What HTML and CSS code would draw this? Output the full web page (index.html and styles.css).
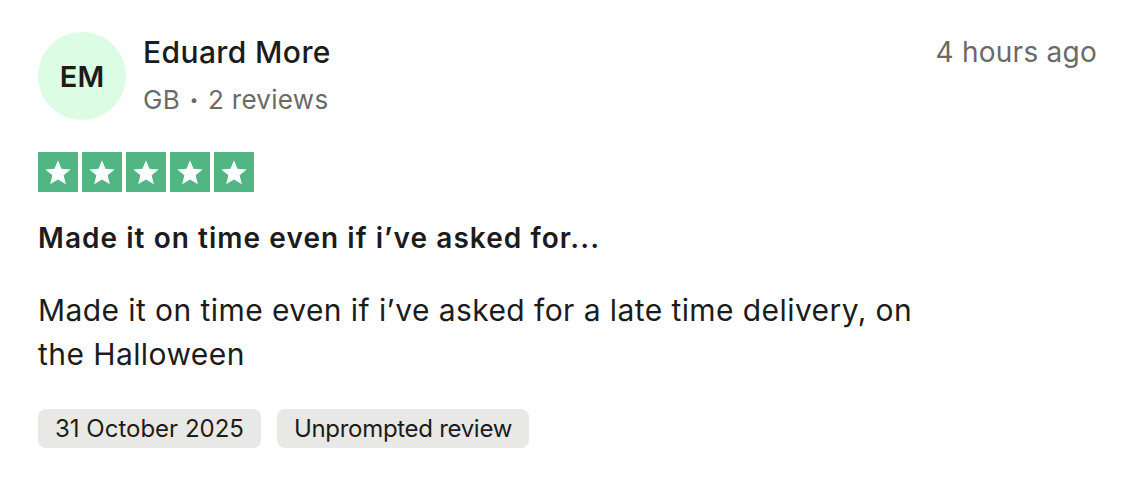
FILE: index.html
```html
<!DOCTYPE html>
<html>
<head>
<meta charset="utf-8">
<link rel="stylesheet" href="styles.css">
</head>
<body>
<article class="review">
  <header class="head">
    <div class="avatar">EM</div>
    <div class="who">
      <div class="name">Eduard More</div>
      <div class="meta">GB <span class="dot">•</span> 2 reviews</div>
    </div>
    <div class="time">4 hours ago</div>
  </header>
  <div class="stars">
    <span class="star"><svg viewBox="0 0 24 24"><path d="M12 3.2l2.6 6.4 6.9.5-5.3 4.4 1.7 6.7L12 17.6l-5.9 3.6 1.7-6.7-5.3-4.4 6.9-.5z"/></svg></span>
    <span class="star"><svg viewBox="0 0 24 24"><path d="M12 3.2l2.6 6.4 6.9.5-5.3 4.4 1.7 6.7L12 17.6l-5.9 3.6 1.7-6.7-5.3-4.4 6.9-.5z"/></svg></span>
    <span class="star"><svg viewBox="0 0 24 24"><path d="M12 3.2l2.6 6.4 6.9.5-5.3 4.4 1.7 6.7L12 17.6l-5.9 3.6 1.7-6.7-5.3-4.4 6.9-.5z"/></svg></span>
    <span class="star"><svg viewBox="0 0 24 24"><path d="M12 3.2l2.6 6.4 6.9.5-5.3 4.4 1.7 6.7L12 17.6l-5.9 3.6 1.7-6.7-5.3-4.4 6.9-.5z"/></svg></span>
    <span class="star"><svg viewBox="0 0 24 24"><path d="M12 3.2l2.6 6.4 6.9.5-5.3 4.4 1.7 6.7L12 17.6l-5.9 3.6 1.7-6.7-5.3-4.4 6.9-.5z"/></svg></span>
  </div>
  <h2 class="title">Made it on time even if i’ve asked for...</h2>
  <p class="text">Made it on time even if i’ve asked for a late time delivery, on the Halloween</p>
  <div class="tags">
    <span class="tag">31 October 2025</span>
    <span class="tag tag-narrow">Unprompted review</span>
  </div>
</article>
</body>
</html>
```
FILE: styles.css
```css
* { box-sizing: border-box; }
html, body { margin: 0; background: #ffffff; }
body {
  font-family: Inter, "Noto Sans", sans-serif;
  color: #1c1c1c;
}
.review {
  padding: 32px 38px 0 38px;
  width: 1136px;
}
.head {
  display: flex;
  align-items: flex-start;
}
.avatar {
  width: 88px;
  height: 88px;
  border-radius: 50%;
  background: #dcfce3;
  display: flex;
  align-items: center;
  justify-content: center;
  font-size: 29px;
  font-weight: 600;
  color: #1c1c1c;
  flex: none;
}
.who {
  margin-left: 17px;
  flex: 1;
  padding-top: 2px;
}
.name {
  font-size: 30px;
  font-weight: 500;
  line-height: 36px;
  letter-spacing: 0.4px;
}
.meta {
  font-size: 26px;
  color: #6b6a66;
  line-height: 32px;
  letter-spacing: 0.3px;
  margin-top: 14px;
}
.dot {
  font-size: 15px;
  vertical-align: 4px;
  margin: 0 2px;
}
.time {
  font-size: 28px;
  color: #6b6a66;
  line-height: 36px;
  letter-spacing: 0.25px;
  padding-top: 2px;
  margin-right: 1px;
}
.stars {
  display: flex;
  gap: 4px;
  margin-top: 32px;
}
.star {
  width: 40px;
  height: 40px;
  background: #51b683;
  display: flex;
  align-items: center;
  justify-content: center;
}
.star svg { width: 32px; height: 32px; fill: #fff; }
.title {
  margin: 28px 0 0 0;
  font-size: 28px;
  font-weight: 600;
  line-height: 36px;
  letter-spacing: 1.05px;
}
.text {
  margin: 32px 0 0 0;
  font-size: 30px;
  line-height: 44px;
  letter-spacing: 0.42px;
  max-width: 900px;
  color: #1c1c1c;
}
.tags {
  display: flex;
  gap: 16px;
  margin-top: 33px;
}
.tag {
  background: #e8e8e6;
  border-radius: 8px;
  height: 39px;
  padding: 0 17px;
  display: flex;
  align-items: center;
  font-size: 24px;
  color: #1c1c1c;
}
.tag-narrow { letter-spacing: -0.3px; }
```
